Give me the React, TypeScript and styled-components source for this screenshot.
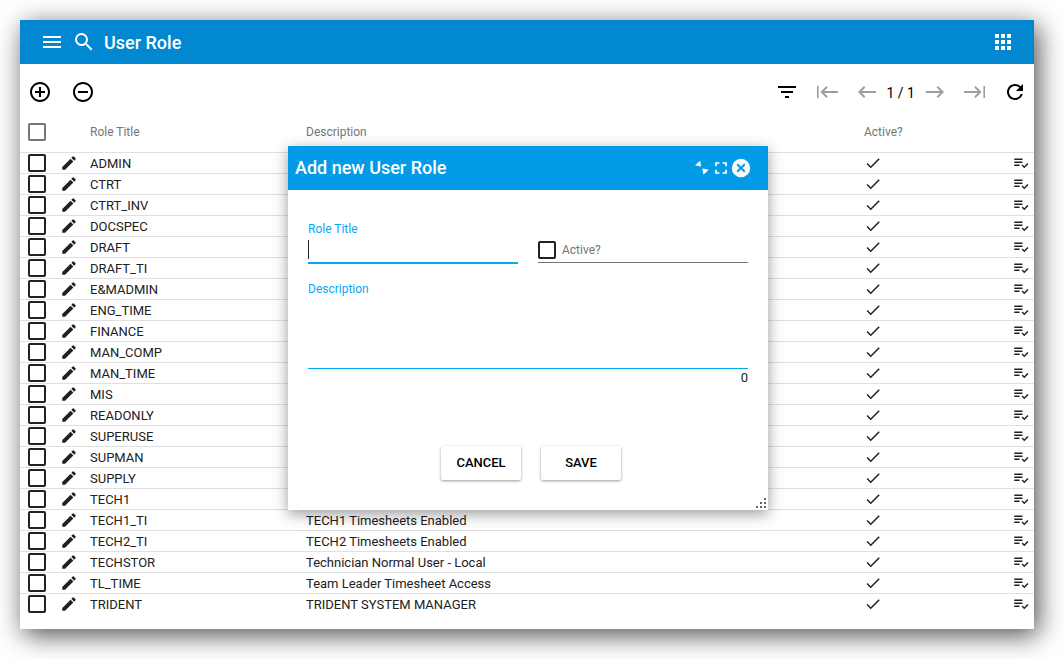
import React from "react";
import styled, { createGlobalStyle } from "styled-components";
import {
  MdAddCircleOutline,
  MdApps,
  MdCheck,
  MdEdit,
  MdFilterList,
  MdFullscreen,
  MdKeyboardBackspace,
  MdMenu,
  MdPlaylistAddCheck,
  MdRefresh,
  MdRemoveCircleOutline,
  MdSearch,
} from "react-icons/md";

const GlobalStyle = createGlobalStyle`
  *, *::before, *::after { box-sizing: border-box; }
  body {
    margin: 0;
    background: #fff;
    color: #212121;
    font-family: Roboto, "Liberation Sans", sans-serif;
    font-size: 13px;
  }
  button, input, textarea { font: inherit; color: inherit; }
`;

const Page = styled.div`
  padding: 20px 30px 30px 20px;
`;

const Window = styled.main`
  position: relative;
  padding-bottom: 14px;
  background: #fff;
  box-shadow: 4px 6px 25px rgba(0, 0, 0, 0.7);
`;

const AppBar = styled.header`
  display: flex;
  align-items: center;
  gap: 8px;
  height: 44px;
  padding: 0 19px 0 20px;
  background: #0288d1;
  color: #fff;
`;

const AppTitle = styled.h1`
  flex: 1;
  margin: 0;
  padding-top: 2px;
  font-size: 18px;
  line-height: 24px;
  font-weight: 500;
`;

const IconButton = styled.button<{ $dim?: boolean }>`
  display: flex;
  flex: none;
  padding: 0;
  border: 0;
  background: none;
  color: ${(p) => (p.$dim ? "#9e9e9e" : "inherit")};
  cursor: pointer;
`;

const Toolbar = styled.div`
  display: flex;
  align-items: center;
  justify-content: space-between;
  height: 56px;
  padding: 0 7px 0 8px;
  color: #000;
`;

const ToolGroup = styled.div<{ $gap: number }>`
  display: flex;
  align-items: center;
  gap: ${(p) => p.$gap}px;
`;

const PageCount = styled.span`
  padding-top: 2px;
  font-size: 14px;
  line-height: 20px;
`;

const Table = styled.table`
  width: 100%;
  table-layout: fixed;
  border-collapse: separate;
  border-spacing: 0;
`;

const Col = styled.col<{ $w?: string }>`
  width: ${(p) => p.$w ?? "auto"};
`;

const HeadCell = styled.th`
  height: 33px;
  padding: 0 0 8px;
  border-bottom: 1px solid #e0e0e0;
  color: #757575;
  font-size: 12px;
  line-height: 16px;
  font-weight: 400;
  text-align: left;
  &:first-child { padding-left: 8px; }
`;

const Cell = styled.td<{ $text?: boolean }>`
  height: 21px;
  padding: ${(p) => (p.$text ? "2px 0 0" : "0")};
  line-height: 18px;
  white-space: nowrap;
  border-bottom: 1px solid #e0e0e0;
  &:first-child { padding-left: 8px; }
  svg { display: block; }
  tr:last-child > & { border-bottom-color: transparent; }
`;

const CheckBox = styled.input.attrs({ type: "checkbox" })<{ $dim?: boolean }>`
  appearance: none;
  display: block;
  flex: none;
  width: 18px;
  height: 18px;
  margin: 0;
  border: 2px solid ${(p) => (p.$dim ? "#757575" : "#212121")};
  border-radius: 2px;
  background: #fff;
  &:checked { background: #0288d1; }
`;

const Dialog = styled.section`
  position: absolute;
  top: 126px;
  left: calc(50% - 239px);
  width: 480px;
  background: #fff;
  box-shadow: 0 4px 14px rgba(0, 0, 0, 0.4);
`;

const DialogBar = styled.header`
  display: flex;
  align-items: center;
  height: 44px;
  padding: 0 17px 0 7px;
  background: #039be5;
  color: #fff;
`;

const DialogTitle = styled.h2`
  flex: 1;
  margin: 0;
  font-size: 18px;
  line-height: 24px;
  font-weight: 500;
`;

const Form = styled.form`
  padding: 30px 20px;
`;

const FieldRow = styled.div`
  display: grid;
  grid-template-columns: 1fr 1fr;
  align-items: end;
  gap: 20px;
  margin-bottom: 16px;
`;

const Field = styled.div`
  position: relative;
  display: flex;
  flex-direction: column;
`;

const FieldLabel = styled.label`
  color: #03a9f4;
  font-size: 12px;
  line-height: 18px;
`;

const TextInput = styled.input`
  width: 100%;
  height: 26px;
  padding: 0 0 2px;
  border: 0;
  border-bottom: 2px solid #03a9f4;
  border-radius: 0;
  background: none;
  font-size: 16px;
  outline: none;
`;

const Caret = styled.span`
  position: absolute;
  left: 0;
  bottom: 5px;
  width: 1px;
  height: 19px;
  background: #212121;
  pointer-events: none;
`;

const TextArea = styled.textarea`
  display: block;
  height: 71px;
  padding: 0;
  border: 0;
  border-bottom: 1px solid #03a9f4;
  border-radius: 0;
  background: none;
  resize: none;
  outline: none;
`;

const CheckField = styled.label`
  display: flex;
  align-items: center;
  gap: 6px;
  height: 26px;
  margin-bottom: 1px;
  border-bottom: 1px solid #757575;
  color: #757575;
  font-size: 12px;
`;

const Counter = styled.output`
  align-self: flex-end;
  line-height: 18px;
`;

const Actions = styled.div`
  display: flex;
  justify-content: center;
  gap: 20px;
  padding-top: 59px;
  padding-left: 6px;
`;

const ActionButton = styled.button`
  width: 80px;
  height: 34px;
  padding: 0 0 2px;
  border: 0;
  border-radius: 2px;
  background: #fff;
  color: #000;
  font-weight: 500;
  text-transform: uppercase;
  box-shadow: 0 1px 3px rgba(0, 0, 0, 0.4);
  cursor: pointer;
`;

const Grip = styled.svg`
  position: absolute;
  right: 1px;
  bottom: 1px;
  fill: #616161;
`;

const Glyph = ({ children }: { children: React.ReactNode }) => (
  <svg width="24" height="24" viewBox="0 0 24 24" fill="currentColor" aria-hidden="true">
    {children}
  </svg>
);

const NextGlyph = () => (
  <Glyph>
    <path d="M3 11h14.17l-3.58-3.59L15 6l6 6-6 6-1.41-1.41L17.17 13H3z" />
  </Glyph>
);

const FirstGlyph = () => (
  <Glyph>
    <path d="M2 6h1.600v12H2zM23 11H9.200l3.580-3.590L11.400 6l-6 6 6 6 1.410-1.410L9.200 13H23z" />
  </Glyph>
);

const LastGlyph = () => (
  <Glyph>
    <path d="M22 6h-1.600v12H22zM1 11h13.800l-3.580-3.590L12.600 6l6 6-6 6-1.410-1.410L14.800 13H1z" />
  </Glyph>
);

const ShrinkGlyph = () => (
  <svg width="17" height="16" viewBox="0 0 17 16" fill="currentColor" aria-hidden="true">
    <path d="M1 5.200L6.200 0.800 7 6.600zM8.400 8.600l6.400 1.200-5.400 5z" />
  </svg>
);

const CloseGlyph = () => (
  <svg width="20" height="20" viewBox="0 0 20 20" aria-hidden="true">
    <circle cx="10" cy="10" r="9.200" fill="#fafafa" />
    <path d="M6.200 6.200l7.600 7.600M13.800 6.200l-7.600 7.600" stroke="#039be5" strokeWidth="2" />
  </svg>
);

const roles: [string, string][] = [
  ["ADMIN", ""],
  ["CTRT", ""],
  ["CTRT_INV", ""],
  ["DOCSPEC", ""],
  ["DRAFT", ""],
  ["DRAFT_TI", ""],
  ["E&MADMIN", ""],
  ["ENG_TIME", ""],
  ["FINANCE", ""],
  ["MAN_COMP", ""],
  ["MAN_TIME", ""],
  ["MIS", ""],
  ["READONLY", ""],
  ["SUPERUSE", ""],
  ["SUPMAN", ""],
  ["SUPPLY", ""],
  ["TECH1", ""],
  ["TECH1_TI", "TECH1 Timesheets Enabled"],
  ["TECH2_TI", "TECH2 Timesheets Enabled"],
  ["TECHSTOR", "Technician Normal User - Local"],
  ["TL_TIME", "Team Leader Timesheet Access"],
  ["TRIDENT", "TRIDENT SYSTEM MANAGER"],
];

export default function App() {
  const [title, setTitle] = React.useState("");
  const [description, setDescription] = React.useState("");
  return (
    <Page>
      <GlobalStyle />
      <Window>
        <AppBar>
          <IconButton aria-label="Menu"><MdMenu size={24} /></IconButton>
          <IconButton aria-label="Search"><MdSearch size={24} /></IconButton>
          <AppTitle>User Role</AppTitle>
          <IconButton aria-label="Apps"><MdApps size={24} /></IconButton>
        </AppBar>

        <Toolbar>
          <ToolGroup $gap={19}>
            <IconButton aria-label="Add"><MdAddCircleOutline size={24} /></IconButton>
            <IconButton aria-label="Remove"><MdRemoveCircleOutline size={24} /></IconButton>
          </ToolGroup>
          <ToolGroup $gap={16}>
            <IconButton aria-label="Filter"><MdFilterList size={24} /></IconButton>
            <IconButton $dim aria-label="First page"><FirstGlyph /></IconButton>
            <ToolGroup $gap={8}>
              <IconButton $dim aria-label="Previous page"><MdKeyboardBackspace size={24} /></IconButton>
              <PageCount>1 / 1</PageCount>
              <IconButton $dim aria-label="Next page"><NextGlyph /></IconButton>
            </ToolGroup>
            <IconButton $dim aria-label="Last page"><LastGlyph /></IconButton>
            <IconButton aria-label="Refresh"><MdRefresh size={24} /></IconButton>
          </ToolGroup>
        </Toolbar>

        <Table>
          <colgroup>
            <Col $w="40px" />
            <Col $w="30px" />
            <Col $w="216px" />
            <Col />
            <Col $w="148px" />
            <Col $w="22px" />
          </colgroup>
          <thead>
            <tr>
              <HeadCell><CheckBox $dim aria-label="Select all roles" /></HeadCell>
              <HeadCell />
              <HeadCell scope="col">Role Title</HeadCell>
              <HeadCell scope="col">Description</HeadCell>
              <HeadCell scope="col">Active?</HeadCell>
              <HeadCell />
            </tr>
          </thead>
          <tbody>
            {roles.map(([name, text]) => (
              <tr key={name}>
                <Cell><CheckBox aria-label={`Select ${name}`} /></Cell>
                <Cell><IconButton aria-label={`Edit ${name}`}><MdEdit size={18} /></IconButton></Cell>
                <Cell $text>{name}</Cell>
                <Cell $text>{text}</Cell>
                <Cell><MdCheck size={18} /></Cell>
                <Cell><IconButton aria-label={`Permissions of ${name}`}><MdPlaylistAddCheck size={18} /></IconButton></Cell>
              </tr>
            ))}
          </tbody>
        </Table>

        <Dialog role="dialog" aria-labelledby="dialog-title">
          <DialogBar>
            <DialogTitle id="dialog-title">Add new User Role</DialogTitle>
            <IconButton aria-label="Shrink"><ShrinkGlyph /></IconButton>
            <IconButton aria-label="Full screen"><MdFullscreen size={20} /></IconButton>
            <IconButton aria-label="Close"><CloseGlyph /></IconButton>
          </DialogBar>
          <Form onSubmit={(e) => e.preventDefault()}>
            <FieldRow>
              <Field>
                <FieldLabel htmlFor="role-title">Role Title</FieldLabel>
                <TextInput id="role-title" autoFocus value={title} onChange={(e) => setTitle(e.target.value)} />
                {title === "" && <Caret />}
              </Field>
              <CheckField><CheckBox />Active?</CheckField>
            </FieldRow>
            <Field>
              <FieldLabel htmlFor="description">Description</FieldLabel>
              <TextArea id="description" value={description} onChange={(e) => setDescription(e.target.value)} />
              <Counter htmlFor="description">{description.length}</Counter>
            </Field>
            <Actions>
              <ActionButton type="button">Cancel</ActionButton>
              <ActionButton type="submit">Save</ActionButton>
            </Actions>
          </Form>
          <Grip width="12" height="12" viewBox="0 0 12 12" aria-hidden="true">
            <path d="M9 1h2v2H9zM5 5h2v2H5zM9 5h2v2H9zM1 9h2v2H1zM5 9h2v2H5zM9 9h2v2H9z" />
          </Grip>
        </Dialog>
      </Window>
    </Page>
  );
}
